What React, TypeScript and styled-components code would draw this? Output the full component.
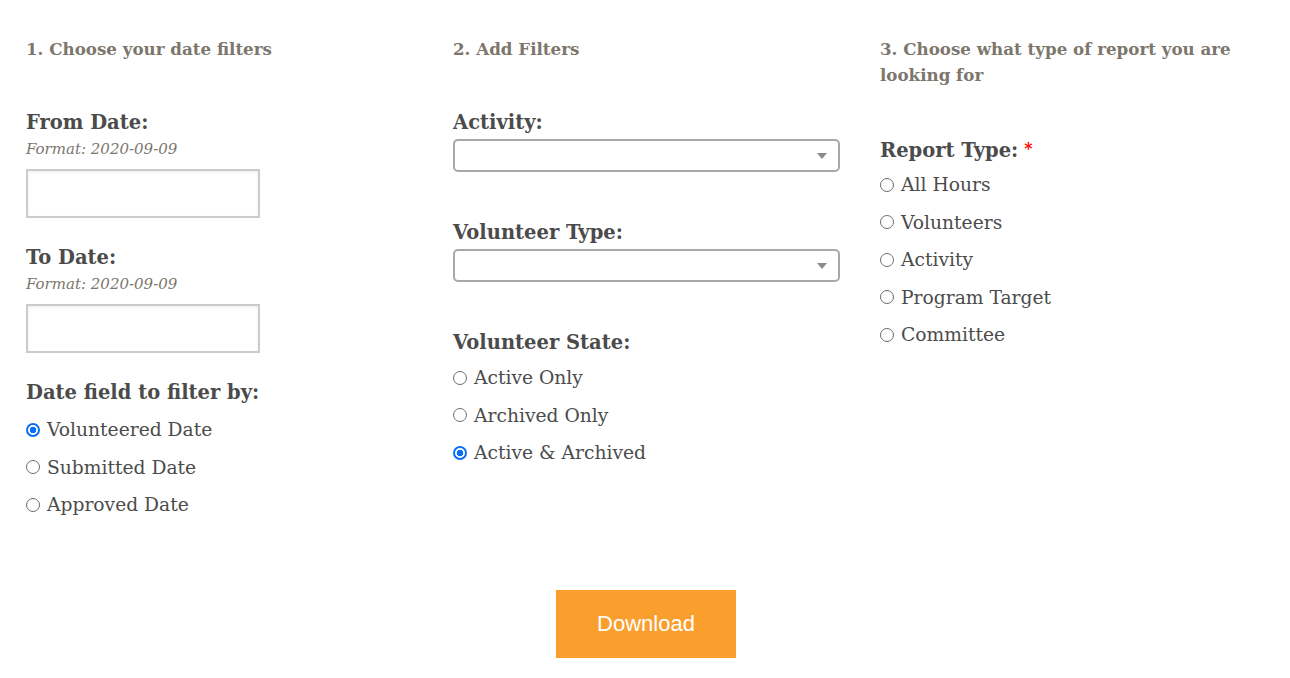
import React from "react";
import styled, { createGlobalStyle } from "styled-components";

const GlobalStyle = createGlobalStyle`
  body {
    margin: 0;
    background: #ffffff;
    font-family: "DejaVu Serif", Georgia, serif;
  }
`;

const Page = styled.div`
  width: 1290px;
  padding: 36px 0 0 26px;
  box-sizing: border-box;
`;

const Columns = styled.div`
  display: grid;
  grid-template-columns: 387px 387px 387px;
  column-gap: 40px;
  align-items: start;
`;

const Column = styled.div`
  display: flex;
  flex-direction: column;
`;

// step titles
const StepTitle = styled.h3`
  margin: 0 0 48px;
  font-size: 16.7px;
  line-height: 26px;
  font-weight: 700;
  color: #7c766c;
`;

const FieldLabel = styled.div<{ $top?: number }>`
  margin-top: ${({ $top }) => $top ?? 0}px;
  font-size: 19.5px;
  line-height: 26px;
  font-weight: 700;
  color: #4b4b4b;
`;

const Required = styled.span`
  color: #ff0000;
  font-size: 16px;
  margin-left: 6px;
  vertical-align: 3px;
`;

const Hint = styled.div`
  margin-top: 3px;
  font-size: 15px;
  line-height: 20px;
  font-style: italic;
  color: #7d766c;
`;

const DateInput = styled.input`
  margin-top: 10px;
  width: 234px;
  height: 49px;
  box-sizing: border-box;
  border: 2px solid #cccccc;
  box-shadow: inset 0 1px 3px rgba(0, 0, 0, 0.08);
  outline: none;
  padding: 0 8px;
`;

const SelectWrap = styled.div`
  position: relative;
  margin-top: 3px;
  width: 387px;
`;

const Select = styled.select`
  appearance: none;
  width: 100%;
  height: 33px;
  box-sizing: border-box;
  border: 2px solid #a8a8a8;
  border-radius: 5px;
  background: #ffffff;
  outline: none;
`;

const Caret = styled.span`
  position: absolute;
  right: 13px;
  top: 14px;
  width: 0;
  height: 0;
  border-left: 5px solid transparent;
  border-right: 5px solid transparent;
  border-top: 6px solid #8a8a8a;
  pointer-events: none;
`;

const RadioGroup = styled.div<{ $top: number }>`
  display: flex;
  flex-direction: column;
  margin-top: ${({ $top }) => $top}px;
`;

const RadioRow = styled.label`
  display: flex;
  align-items: center;
  height: 37.5px;
  font-size: 18.7px;
  color: #4b4b4b;
  gap: 7px;
`;

const Radio = styled.input.attrs({ type: "radio" })`
  appearance: none;
  margin: 0;
  width: 14px;
  height: 14px;
  box-sizing: border-box;
  border-radius: 50%;
  border: 1.5px solid #6e6e6e;
  background: #ffffff;
  flex-shrink: 0;

  &:checked {
    border: 2px solid #0b6ef5;
    background: radial-gradient(circle, #0b6ef5 0 3px, #ffffff 3.6px);
  }
`;

const Footer = styled.div`
  display: flex;
  justify-content: center;
  margin: 66px 0 0 -24px;
`;

const DownloadButton = styled.button`
  width: 180px;
  height: 68px;
  border: none;
  background: #fa9e2e;
  color: #ffffff;
  font-family: "Liberation Sans", Arial, sans-serif;
  font-size: 22px;
  cursor: pointer;
`;

type Option = { label: string; checked?: boolean };

const RadioList = ({ name, top, options }: { name: string; top: number; options: Option[] }) => (
  <RadioGroup $top={top}>
    {options.map((o) => (
      <RadioRow key={o.label}>
        <Radio name={name} defaultChecked={o.checked} />
        {o.label}
      </RadioRow>
    ))}
  </RadioGroup>
);

const Dropdown = () => (
  <SelectWrap>
    <Select defaultValue="">
      <option value="" />
    </Select>
    <Caret />
  </SelectWrap>
);

export default function App() {
  return (
    <Page>
      <GlobalStyle />
      <Columns>
        <Column>
          <StepTitle>1. Choose your date filters</StepTitle>
          <FieldLabel>From Date:</FieldLabel>
          <Hint>Format: 2020-09-09</Hint>
          <DateInput type="text" />
          <FieldLabel $top={27}>To Date:</FieldLabel>
          <Hint>Format: 2020-09-09</Hint>
          <DateInput type="text" />
          <FieldLabel $top={27}>Date field to filter by:</FieldLabel>
          <RadioList
            name="dateField"
            top={5}
            options={[
              { label: "Volunteered Date", checked: true },
              { label: "Submitted Date" },
              { label: "Approved Date" },
            ]}
          />
        </Column>

        <Column>
          <StepTitle>2. Add Filters</StepTitle>
          <FieldLabel>Activity:</FieldLabel>
          <Dropdown />
          <FieldLabel $top={48}>Volunteer Type:</FieldLabel>
          <Dropdown />
          <FieldLabel $top={48}>Volunteer State:</FieldLabel>
          <RadioList
            name="state"
            top={3}
            options={[
              { label: "Active Only" },
              { label: "Archived Only" },
              { label: "Active & Archived", checked: true },
            ]}
          />
        </Column>

        <Column>
          <StepTitle>3. Choose what type of report you are looking for</StepTitle>
          <FieldLabel>
            Report Type:<Required>*</Required>
          </FieldLabel>
          <RadioList
            name="report"
            top={2}
            options={[
              { label: "All Hours" },
              { label: "Volunteers" },
              { label: "Activity" },
              { label: "Program Target" },
              { label: "Committee" },
            ]}
          />
        </Column>
      </Columns>

      <Footer>
        <DownloadButton>Download</DownloadButton>
      </Footer>
    </Page>
  );
}
